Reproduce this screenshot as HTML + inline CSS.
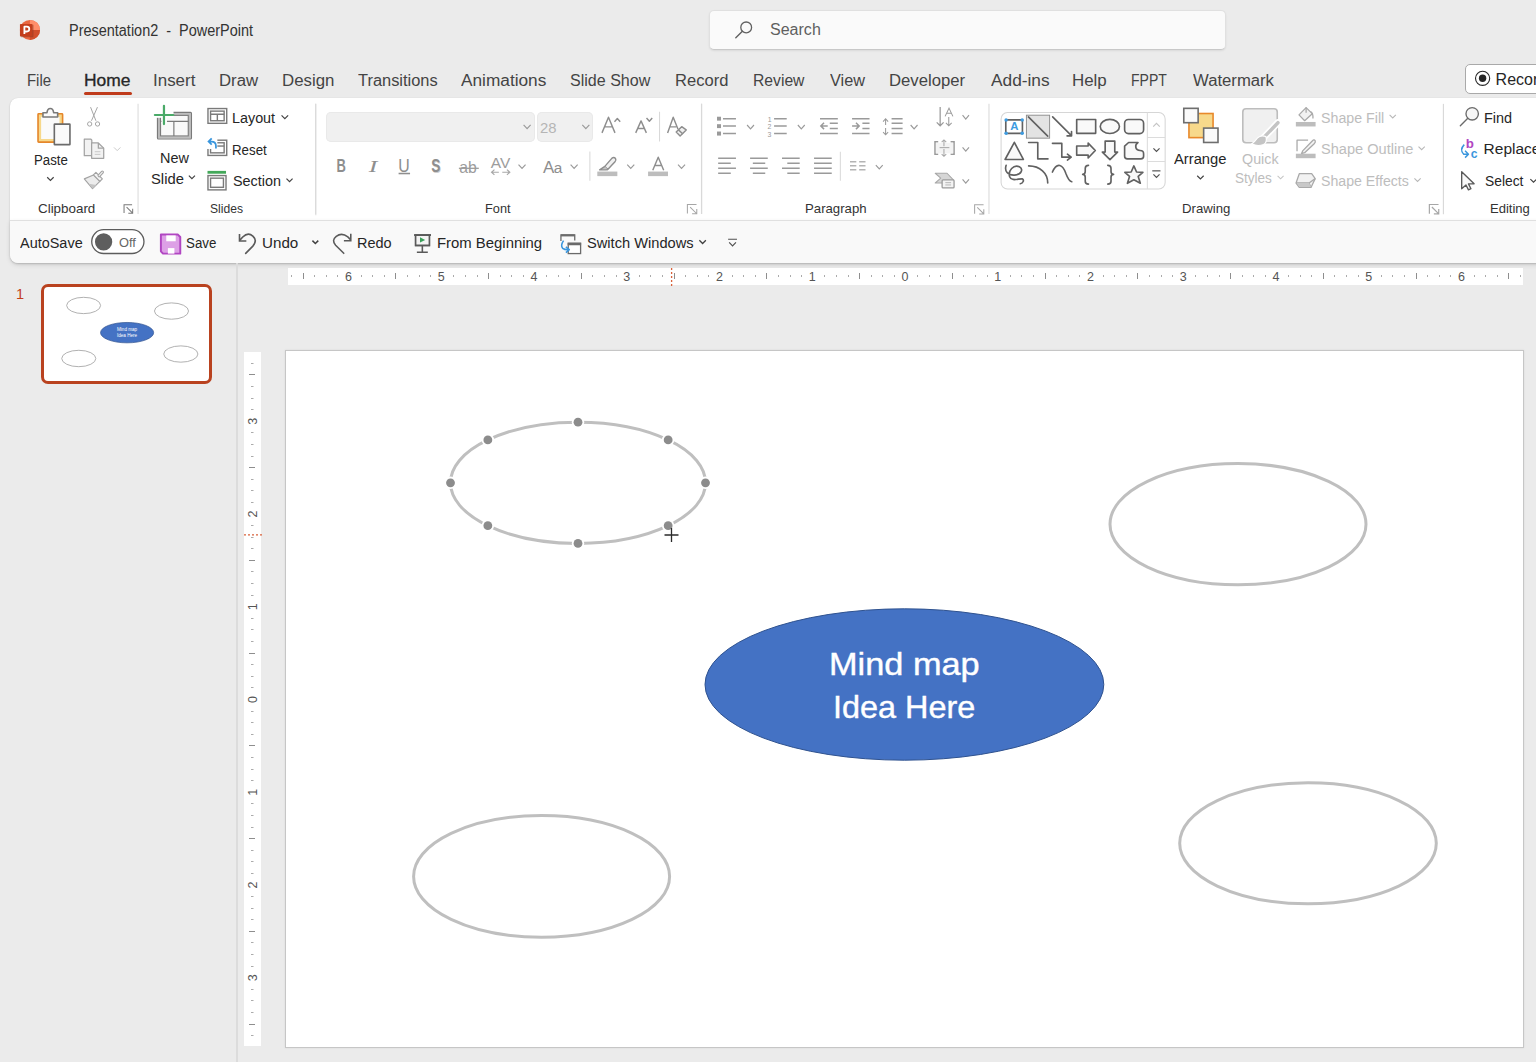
<!DOCTYPE html>
<html><head><meta charset="utf-8"><style>*{margin:0;padding:0;box-sizing:border-box}
html,body{width:1536px;height:1062px;overflow:hidden;background:#ebebeb;font-family:"Liberation Sans",sans-serif;color:#242424}
.a{position:absolute}
.f{position:absolute;white-space:nowrap;line-height:1;transform-origin:0 0}
svg{overflow:visible}
</style></head><body>
<svg class="a" style="left:10px;top:14px" width="40" height="32" viewBox="0 0 1328 1062" preserveAspectRatio="none">
  <circle cx="662" cy="530" r="335" fill="#e9663f"></circle>
  <path d="M662 195 A335 335 0 0 1 997 530 H662Z" fill="#ff8e6a"></path>
  <path d="M662 530 H997 A335 335 0 0 1 662 865Z" fill="#d14e2b"></path>
  <rect x="350" y="350" width="430" height="420" rx="30" fill="#8f3a22" opacity="0.55"></rect>
  <rect x="330" y="330" width="410" height="410" rx="28" fill="#c43e1c"></rect>
  <path d="M478 660 V420 H560 Q640 420 640 500 Q640 580 560 580 H478" fill="none" stroke="#fff" stroke-width="60" stroke-linejoin="round"></path>
</svg>
<span class="f" style="--l: 70.3; --r: 253.9; --b: 35.9; font-size: 16px; color: rgb(51, 51, 51); font-weight: normal; left: 69.4px; top: 23px; transform: scaleX(0.9035);">Presentation2&nbsp; -&nbsp; PowerPoint</span>
<div class="a" style="left:709px;top:10px;width:517px;height:40px;background:#fafafa;border:1px solid #e0e0e0;border-bottom:1px solid #c8c8c8;border-radius:5px;box-shadow:0 1px 2px rgba(0,0,0,.08)"></div>
<svg class="a" style="left:733px;top:19px" width="22" height="22" viewBox="0 0 22 22" preserveAspectRatio="none"><circle cx="13.2" cy="8.4" r="5.4" fill="none" stroke="#616161" stroke-width="1.3"></circle><path d="M9.4 12.2 L2.8 18.8" stroke="#616161" stroke-width="1.4" stroke-linecap="round"></path></svg>
<span class="f" style="--l: 770.3; --r: 820.2; --b: 35.0; font-size: 16px; color: rgb(95, 95, 95); font-weight: normal; left: 770.3px; top: 22px; transform: scaleX(1.0021);">Search</span>
<span class="f" style="--l: 28.0; --r: 51.2; --b: 85.9; font-size: 16px; color: rgb(68, 68, 68); font-weight: normal; left: 27.07px; top: 73px; transform: scaleX(0.9324);">File</span>
<span class="f" style="--l: 84.8; --r: 130.3; --b: 85.9; font-size: 16px; color: rgb(38, 38, 38); font-weight: normal; -webkit-text-stroke: 0.3px rgb(38, 38, 38); left: 83.71px; top: 73px; transform: scaleX(1.089);">Home</span>
<span class="f" style="--l: 154.2; --r: 196.1; --b: 85.9; font-size: 16px; color: rgb(68, 68, 68); font-weight: normal; left: 153.14px; top: 73px; transform: scaleX(1.0589);">Insert</span>
<span class="f" style="--l: 220.3; --r: 258.8; --b: 85.9; font-size: 16px; color: rgb(68, 68, 68); font-weight: normal; left: 219.25px; top: 73px; transform: scaleX(1.0467);">Draw</span>
<span class="f" style="--l: 282.8; --r: 333.2; --b: 85.9; font-size: 16px; color: rgb(68, 68, 68); font-weight: normal; left: 281.75px; top: 73px; transform: scaleX(1.0521);">Design</span>
<span class="f" style="--l: 357.7; --r: 437.4; --b: 85.9; font-size: 16px; color: rgb(68, 68, 68); font-weight: normal; left: 357.7px; top: 73px; transform: scaleX(1.0263);">Transitions</span>
<span class="f" style="--l: 461.2; --r: 546.5; --b: 85.9; font-size: 16px; color: rgb(68, 68, 68); font-weight: normal; left: 461.2px; top: 73px; transform: scaleX(1.0777);">Animations</span>
<span class="f" style="--l: 569.9; --r: 650.6; --b: 85.9; font-size: 16px; color: rgb(68, 68, 68); font-weight: normal; left: 569.9px; top: 73px; transform: scaleX(1.0026);">Slide Show</span>
<span class="f" style="--l: 675.7; --r: 727.1; --b: 85.9; font-size: 16px; color: rgb(68, 68, 68); font-weight: normal; left: 674.67px; top: 73px; transform: scaleX(1.0346);">Record</span>
<span class="f" style="--l: 753.9; --r: 804.8; --b: 85.9; font-size: 16px; color: rgb(68, 68, 68); font-weight: normal; left: 752.92px; top: 73px; transform: scaleX(0.9806);">Review</span>
<span class="f" style="--l: 830.2; --r: 865.6; --b: 85.9; font-size: 16px; color: rgb(68, 68, 68); font-weight: normal; left: 830.2px; top: 73px; transform: scaleX(1.0162);">View</span>
<span class="f" style="--l: 890.3; --r: 966.0; --b: 85.9; font-size: 16px; color: rgb(68, 68, 68); font-weight: normal; left: 889.26px; top: 73px; transform: scaleX(1.0427);">Developer</span>
<span class="f" style="--l: 990.7; --r: 1049.3; --b: 85.9; font-size: 16px; color: rgb(68, 68, 68); font-weight: normal; left: 990.7px; top: 73px; transform: scaleX(1.0802);">Add-ins</span>
<span class="f" style="--l: 1072.8; --r: 1106.6; --b: 85.9; font-size: 16px; color: rgb(68, 68, 68); font-weight: normal; left: 1071.74px; top: 73px; transform: scaleX(1.056);">Help</span>
<span class="f" style="--l: 1132.0; --r: 1167.1; --b: 85.9; font-size: 16px; color: rgb(68, 68, 68); font-weight: normal; left: 1131.13px; top: 73px; transform: scaleX(0.8749);">FPPT</span>
<span class="f" style="--l: 1192.5; --r: 1274.5; --b: 85.9; font-size: 16px; color: rgb(68, 68, 68); font-weight: normal; left: 1192.5px; top: 73px; transform: scaleX(1.0428);">Watermark</span>
<div class="a" style="left:84px;top:91.8px;width:47.6px;height:3px;background:#c03b1b;border-radius:2px"></div>
<div class="a" style="left:1465px;top:64px;width:100px;height:30px;background:#fff;border:1px solid #a9a9a9;border-radius:5px"></div>
<svg class="a" style="left:1474px;top:70px" width="18" height="18" viewBox="0 0 18 18" preserveAspectRatio="none"><circle cx="8.6" cy="8.3" r="7.1" fill="none" stroke="#262626" stroke-width="1.1"></circle><circle cx="8.6" cy="8.3" r="3.7" fill="#262626"></circle></svg>
<span class="f" style="--l: 1496.6; --r: -1; --b: 84.9; font-size: 16px; color: rgb(38, 38, 38); font-weight: normal; left: 1495.6px; top: 72px;">Record</span>
<div class="a" style="left:10px;top:98px;width:1560px;height:165px;background:#fff;border-radius:8px;box-shadow:0 1px 2px rgba(0,0,0,.16),0 0 1px rgba(0,0,0,.12)"></div>
<div class="a" style="left:10px;top:220px;width:1560px;height:43px;background:#f9f9f9;border-top:1px solid #e0e0e0;border-radius:0 0 8px 8px;box-shadow:0 2px 5px rgba(0,0,0,.10)"></div>
<svg class="a" style="left:10px;top:98px" width="140" height="122" viewBox="0 0 1219 1062" preserveAspectRatio="none">
  <rect x="244" y="137" width="214" height="247" rx="6" fill="#f7d88a" stroke="#e5862a" stroke-width="14"></rect>
  <rect x="271" y="164" width="160" height="193" fill="#fafafa"></rect>
  <path d="M287 128 H322 Q326 92 351 92 Q376 92 380 128 H415 V166 H287Z" fill="#fafafa" stroke="#7a7a7a" stroke-width="14" stroke-linejoin="round"></path>
  <rect x="386" y="227" width="136" height="179" rx="4" fill="#fafafa" stroke="#6b6b6b" stroke-width="14"></rect>
  <path d="M324 690 L352 718 L380 690" fill="none" stroke="#424242" stroke-width="10"></path>
  <g stroke="#7a7a7a" stroke-width="9" fill="none">
    <path d="M993 1000 V930 H1063"></path>
    <path d="M1015 950 L1068 1003 M1030 1003 H1068 V965"></path>
  </g>
  <path d="M1115 50 V1010" stroke="#dedede" stroke-width="10"></path>
</svg>
<svg class="a" style="left:80px;top:100px" width="45" height="95" viewBox="0 0 503 1062" preserveAspectRatio="none">
  <g stroke="#a3a3a3" stroke-width="11" fill="none">
    <path d="M118 80 L178 232 M195 80 L128 232"></path>
    <circle cx="108" cy="268" r="24"></circle><circle cx="196" cy="268" r="24"></circle>
  </g>
  <g stroke="#a3a3a3" stroke-width="14" fill="#f2f2f2" stroke-linejoin="round">
    <path d="M48 437 H122 L132 450 V622 H48Z"></path>
    <path d="M130 480 H205 L265 538 V652 H130Z"></path>
    <path d="M205 480 V538 H265" fill="none"></path>
  </g>
  <path d="M165 578 H228 M165 608 H228" stroke="#c4c4c4" stroke-width="10"></path>
  <path d="M380 530 L416 566 L452 530" fill="none" stroke="#c4c4c4" stroke-width="10"></path>
  <g stroke="#a3a3a3" stroke-width="13" stroke-linejoin="round">
    <path d="M48 882 L150 838 L222 910 L140 990Z" fill="#ececec"></path>
    <path d="M98 936 L182 950 L140 990Z" fill="#c4c4c4" stroke="none"></path>
    <path d="M150 838 L178 810 L250 882 L222 910Z" fill="#f4f4f4"></path>
    <path d="M214 846 L250 806" stroke-width="36" stroke-linecap="round"></path>
  </g>
  <path d="M214 846 L250 806" stroke="#f4f4f4" stroke-width="12" stroke-linecap="round"></path>
</svg>
<span class="f" style="--l: 34.7; --r: 67.2; --b: 165.2; font-size: 15.5px; color: rgb(38, 38, 38); font-weight: normal; left: 33.85px; top: 152px; transform: scaleX(0.8549);">Paste</span>
<span class="f" style="--l: 37.6; --r: 94.4; --b: 213.3; font-size: 13.5px; color: rgb(51, 51, 51); font-weight: normal; left: 37.6px; top: 202px; transform: scaleX(0.9917);">Clipboard</span>
<svg class="a" style="left:140px;top:98px" width="180" height="122" viewBox="0 0 1536 1041" preserveAspectRatio="none">
  <rect x="162" y="135" width="263" height="202" fill="#f9f9f9" stroke="#bdbdbd" stroke-width="18"></rect>
  <g fill="none" stroke="#7a7a7a" stroke-width="10">
    <rect x="149" y="122" width="290" height="228" rx="8"></rect>
    <rect x="175" y="148" width="237" height="176"></rect>
    <path d="M175 200 H412 M289 200 V324"></path>
  </g>
  <rect x="105" y="50" width="181" height="119" fill="#fff"></rect>
  <rect x="183" y="169" width="47" height="50" fill="#fff"></rect>
  <path d="M127 145 H284 M204.5 67 V222" stroke="#4aaa68" stroke-width="19" stroke-linecap="round"></path>
  <g fill="none" stroke="#7a7a7a" stroke-width="12">
    <rect x="580" y="90" width="160" height="126"></rect>
    <rect x="602" y="112" width="116" height="82"></rect>
    <path d="M602 138 H718 M660 138 V194"></path>
    <rect x="580" y="360" width="160" height="130"></rect>
    <rect x="602" y="382" width="116" height="86"></rect>
    <path d="M602 410 H718"></path>
    <rect x="580" y="662" width="154" height="122"></rect>
    <rect x="602" y="684" width="110" height="78"></rect>
  </g>
  <rect x="565" y="340" width="95" height="95" fill="#fff"></rect>
  <path d="M648 430 V410 Q648 372 610 372 H588 M612 345 L585 372 L612 398" fill="none" stroke="#3a96dd" stroke-width="15"></path>
  <rect x="576" y="622" width="158" height="24" fill="#43a85a"></rect>
  <g fill="none" stroke="#424242" stroke-width="10">
    <path d="M1208 148 L1236 176 L1264 148"></path>
    <path d="M417 662 L443 688 L469 662"></path>
    <path d="M1250 688 L1276 714 L1302 688"></path>
  </g>
  <path d="M1500 50 V1000" stroke="#dedede" stroke-width="10"></path>
</svg>
<span class="f" style="--l: 160.5; --r: 189.2; --b: 163.0; font-size: 15.5px; color: rgb(38, 38, 38); font-weight: normal; left: 159.57px; top: 150px; transform: scaleX(0.9314);">New</span>
<span class="f" style="--l: 151.1; --r: 183.4; --b: 183.5; font-size: 15.5px; color: rgb(38, 38, 38); font-weight: normal; left: 151.1px; top: 171px; transform: scaleX(0.9543);">Slide</span>
<span class="f" style="--l: 233.2; --r: 276.0; --b: 122.6; font-size: 15.5px; color: rgb(38, 38, 38); font-weight: normal; left: 232.27px; top: 110px; transform: scaleX(0.9258);">Layout</span>
<span class="f" style="--l: 233.2; --r: 267.7; --b: 154.5; font-size: 15.5px; color: rgb(38, 38, 38); font-weight: normal; left: 232.34px; top: 142px; transform: scaleX(0.8585);">Reset</span>
<span class="f" style="--l: 233.2; --r: 280.6; --b: 185.9; font-size: 15.5px; color: rgb(38, 38, 38); font-weight: normal; left: 233.2px; top: 173px; transform: scaleX(0.928);">Section</span>
<span class="f" style="--l: 209.7; --r: 242.9; --b: 213.3; font-size: 13.5px; color: rgb(51, 51, 51); font-weight: normal; left: 209.7px; top: 202px; transform: scaleX(0.8968);">Slides</span>
<div class="a" style="left:326px;top:111.7px;width:208.5px;height:30px;background:#f0f0f0;border-radius:5px;box-shadow:inset 0 0 0 1px #e9e9e9"></div>
<div class="a" style="left:536.5px;top:111.7px;width:56.6px;height:30px;background:#f0f0f0;border-radius:5px;box-shadow:inset 0 0 0 1px #e9e9e9"></div>
<span class="f" style="--l: 539.7; --r: 555.6; --b: 133.2; font-size: 15.5px; color: rgb(181, 181, 181); font-weight: normal; left: 539.7px; top: 120px; transform: scaleX(0.9567);">28</span>
<svg class="a" style="left:315px;top:98px" width="200" height="122" viewBox="0 0 1536 937" preserveAspectRatio="none">
  <path d="M5 45 V890" stroke="#d9d9d9" stroke-width="8"></path>
  <text x="165" y="565" font-family="Liberation Sans" font-size="140" font-weight="bold" fill="#8e8e8e" textLength="72" lengthAdjust="spacingAndGlyphs">B</text>
  <text x="412" y="565" font-family="Liberation Serif" font-size="135" font-style="italic" fill="#8e8e8e" textLength="66" lengthAdjust="spacingAndGlyphs">I</text>
  <text x="640" y="565" font-family="Liberation Sans" font-size="136" fill="#8e8e8e" textLength="88" lengthAdjust="spacingAndGlyphs">U</text>
  <path d="M642 580 H730" stroke="#8e8e8e" stroke-width="12"></path>
  <text x="899" y="576" font-family="Liberation Sans" font-size="136" font-weight="bold" fill="#d0d0d0" textLength="70" lengthAdjust="spacingAndGlyphs">S</text><text x="893" y="568" font-family="Liberation Sans" font-size="136" font-weight="bold" fill="#8e8e8e" textLength="70" lengthAdjust="spacingAndGlyphs">S</text>
  <text x="1108" y="575" font-family="Liberation Sans" font-size="125" fill="#9c9c9c" textLength="135" lengthAdjust="spacingAndGlyphs">ab</text>
  <path d="M1105 540 H1258" stroke="#9c9c9c" stroke-width="10"></path>
  <text x="1350" y="535" font-family="Liberation Sans" font-size="118" fill="#9c9c9c" textLength="150" lengthAdjust="spacingAndGlyphs">AV</text>
  <g fill="none" stroke="#a8a8a8" stroke-width="9">
    <path d="M1352 570 H1412 M1378 550 L1356 570 L1378 590"></path>
    <path d="M1438 570 H1498 M1474 550 L1496 570 L1474 590"></path>
  </g>
</svg>
<svg class="a" style="left:515px;top:98px" width="200" height="122" viewBox="0 0 1536 937" preserveAspectRatio="none">
  <g fill="none" stroke="#9a9a9a" stroke-width="9">
    <path d="M66 207 L93 236 L120 207"></path>
    <path d="M517 207 L544 236 L571 207"></path>
    <path d="M27 512 L54 541 L81 512"></path>
    <path d="M427 512 L454 541 L481 512"></path>
    <path d="M862 512 L889 541 L916 512"></path>
    <path d="M1252 512 L1279 541 L1306 512"></path>
  </g>
  <g fill="none" stroke="#8e8e8e" stroke-width="11" stroke-linejoin="round">
    <path d="M668 268 L718 148 L768 268 M688 222 H748"></path>
    <path d="M764 182 L786 158 L808 182"></path>
    <path d="M927 268 L968 176 L1009 268 M943 234 H993"></path>
    <path d="M1010 154 L1032 178 L1054 154"></path>
    <path d="M1172 268 L1215 148 L1252 240 M1188 222 H1238"></path>
    <path d="M1238 262 L1280 220 L1315 245 L1268 292Z" fill="#f0f0f0"></path>
    <path d="M1255 245 L1290 276"></path>
  </g>
  <path d="M1110 105 V335 M575 410 V635 M1432 45 V890" stroke="#d9d9d9" stroke-width="8"></path>
  <text x="215" y="575" font-family="Liberation Sans" font-size="130" fill="#8e8e8e">A</text>
  <text x="298" y="575" font-family="Liberation Sans" font-size="118" fill="#8e8e8e">a</text>
  <g fill="none" stroke="#8e8e8e" stroke-width="11" stroke-linejoin="round">
    <path d="M690 525 L745 462 Q760 450 772 465 Q780 478 768 490 L712 550 Z" fill="#f0f0f0"></path>
    <path d="M690 525 L650 552 H700 L712 550" fill="#c4c4c4"></path>
    <path d="M1058 555 L1100 455 L1142 555 M1074 518 H1126"></path>
  </g>
  <rect x="632" y="565" width="154" height="35" fill="#bdbdbd"></rect>
  <rect x="1022" y="565" width="153" height="35" fill="#bdbdbd"></rect>
  <g stroke="#a6a6a6" stroke-width="8" fill="none">
    <path d="M1324 888 V818 H1394"></path>
    <path d="M1345 838 L1396 889 M1360 889 H1396 V853"></path>
  </g>
</svg>
<span class="f" style="--l: 486.2; --r: 511.0; --b: 213.3; font-size: 13.5px; color: rgb(51, 51, 51); font-weight: normal; left: 485.26px; top: 202px; transform: scaleX(0.9443);">Font</span>
<svg class="a" style="left:700px;top:98px" width="150" height="122" viewBox="0 0 1306 1062" preserveAspectRatio="none">
  <path d="M15 50 V1010 M1222 468 V720" stroke="#d9d9d9" stroke-width="9"></path>
  <g fill="#9a9a9a">
    <rect x="148" y="163" width="35" height="34"></rect><rect x="148" y="228" width="35" height="34"></rect><rect x="148" y="292" width="35" height="35"></rect>
  </g>
  <g stroke="#9a9a9a" stroke-width="13" fill="none">
    <path d="M200 180 H313 M200 243 H313 M200 310 H313"></path>
    <path d="M645 180 H755 M645 243 H755 M645 310 H755"></path>
    <path d="M1045 180 H1200 M1045 310 H1200 M1130 220 H1200 M1130 265 H1200"></path>
    <path d="M1050 243 H1112 M1080 215 L1052 243 L1080 271"></path>
    <path d="M158 525 H313 M158 568 H268 M158 612 H313 M158 656 H268"></path>
    <path d="M436 525 H590 M460 568 H568 M436 612 H590 M460 656 H568"></path>
    <path d="M714 525 H868 M760 568 H868 M714 612 H868 M760 656 H868"></path>
    <path d="M993 525 H1147 M993 568 H1147 M993 612 H1147 M993 656 H1147"></path>
  </g>
  <path d="M410 235 L440 268 L470 235" fill="none" stroke="#9a9a9a" stroke-width="10"></path><path d="M852 235 L882 268 L912 235" fill="none" stroke="#9a9a9a" stroke-width="10"></path>
  <g font-family="Liberation Sans" font-size="60" fill="#9a9a9a">
    <text x="590" y="205">1</text><text x="588" y="270">2</text><text x="588" y="338">3</text>
  </g>
</svg>
<svg class="a" style="left:850px;top:98px" width="150" height="122" viewBox="0 0 1306 1062" preserveAspectRatio="none">
  <path d="M1210 50 V1010" stroke="#d9d9d9" stroke-width="9"></path>
  <g stroke="#9a9a9a" stroke-width="13" fill="none">
    <path d="M18 180 H170 M18 310 H170 M108 220 H170 M108 265 H170"></path>
    <path d="M18 243 H80 M52 215 L80 243 L52 271"></path>
    <path d="M362 180 H458 M362 220 H458 M362 265 H458 M362 310 H458"></path>
    <path d="M0 555 H55 M0 590 H55 M0 625 H55 M80 555 H135 M80 590 H135 M80 625 H135" stroke="#b4b4b4"></path>
  </g>
  <g stroke="#9a9a9a" stroke-width="9" fill="none">
    <path d="M310 180 V235 M288 205 L310 180 L332 205"></path>
    <path d="M310 262 V320 M288 297 L310 320 L332 297"></path>
    <path d="M785 78 V242 M755 212 L785 242 L815 212" stroke-width="11"></path>
    <path d="M860 165 V242 M835 217 L860 242 L885 217"></path>
    <path d="M828 160 L862 88 L896 160 M840 133 H884"></path>
  </g>
  <path d="M768 380 H740 V490 H768 M876 380 H906 V490 H876" fill="none" stroke="#9a9a9a" stroke-width="13"></path>
  <rect x="748" y="390" width="150" height="92" fill="#f4f4f4"></rect>
  <g stroke="#a8a8a8" stroke-width="9" fill="none">
    <path d="M780 432 H865"></path>
    <path d="M818 365 V420 M798 385 L818 365 L838 385"></path>
    <path d="M818 445 V508 M798 488 L818 508 L838 488"></path>
  </g>
  <path d="M742 655 H845 L900 712 L845 740 H742 L790 698Z" fill="#d6d6d6" stroke="#a8a8a8" stroke-width="9" stroke-linejoin="round"></path>
  <rect x="802" y="712" width="104" height="70" rx="8" fill="#f4f4f4" stroke="#9a9a9a" stroke-width="11"></rect>
  <path d="M830 737 H880 M830 757 H880" stroke="#b0b0b0" stroke-width="8"></path>
  <path d="M528 235 L558 268 L588 235" fill="none" stroke="#9a9a9a" stroke-width="10"></path><path d="M225 585 L255 618 L285 585" fill="none" stroke="#9a9a9a" stroke-width="10"></path><path d="M980 150 L1008 183 L1036 150" fill="none" stroke="#9a9a9a" stroke-width="10"></path><path d="M980 430 L1008 463 L1036 430" fill="none" stroke="#9a9a9a" stroke-width="10"></path><path d="M980 708 L1008 741 L1036 708" fill="none" stroke="#9a9a9a" stroke-width="10"></path>
  <g stroke="#a6a6a6" stroke-width="9" fill="none">
    <path d="M1085 1008 V930 H1163"></path>
    <path d="M1108 952 L1165 1009 M1125 1009 H1165 V969"></path>
  </g>
</svg>
<span class="f" style="--l: 805.5; --r: 865.6; --b: 213.3; font-size: 13.5px; color: rgb(51, 51, 51); font-weight: normal; left: 804.52px; top: 202px; transform: scaleX(0.9767);">Paragraph</span>
<svg class="a" style="left:995px;top:105px" width="180" height="90" viewBox="0 0 1536 768" preserveAspectRatio="none">
  <rect x="52" y="64" width="1400" height="652" rx="55" fill="#fff" stroke="#d6d6d6" stroke-width="9"></rect>
  <path d="M1300 64 V716 M1300 278 H1452 M1300 482 H1452" stroke="#dcdcdc" stroke-width="9"></path>
  <rect x="268" y="87" width="198" height="196" fill="#e3e3e3" stroke="#8c8c8c" stroke-width="8"></rect>
  <g fill="#f9f9f9" stroke="#616161" stroke-width="14" stroke-linejoin="round" stroke-linecap="round">
    <rect x="92" y="127" width="142" height="115" fill="none"></rect>
    <path d="M285 102 L450 265" fill="none"></path>
    <path d="M492 102 L652 262 M615 264 H653 V226" fill="none"></path>
    <rect x="697" y="124" width="162" height="118"></rect>
    <ellipse cx="980" cy="183" rx="82" ry="60"></ellipse>
    <rect x="1106" y="124" width="162" height="120" rx="32"></rect>
    <path d="M165 318 L242 465 H86Z"></path>
    <path d="M287 320 H365 V460 H452" fill="none"></path>
    <path d="M490 327 H570 V445 H650 M618 420 L650 445 L618 470" fill="none"></path>
    <path d="M697 350 H795 V325 L856 388 L795 452 V428 H697Z"></path>
    <path d="M940 308 H1022 V402 H1046 L981 466 L916 402 H940Z"></path>
    <path d="M1140 320 H1220 C1190 340 1195 388 1238 388 Q1268 388 1268 415 V438 Q1268 460 1245 460 H1130 Q1106 460 1106 438 V350Z"></path>
    <path d="M95 515 C78 565 110 600 165 598 C230 596 242 545 208 527 C160 505 108 560 125 612 C140 655 200 628 232 630 C252 640 240 668 216 672" fill="none"></path>
    <path d="M287 520 C385 522 450 580 450 665" fill="none"></path>
    <path d="M490 572 C530 480 580 510 605 585 C625 640 640 652 655 655" fill="none"></path>
    <path d="M798 515 Q770 515 770 542 V568 Q770 592 748 592 Q770 592 770 616 V650 Q770 675 798 675" fill="none"></path>
    <path d="M962 515 Q990 515 990 542 V568 Q990 592 1012 592 Q990 592 990 616 V650 Q990 675 962 675" fill="none"></path>
    <path d="M1185 520 L1208 572 L1262 575 L1222 610 L1240 668 L1185 638 L1130 668 L1148 610 L1108 575 L1162 572Z"></path>
  </g>
  <g fill="#3d9be0">
    <circle cx="95" cy="127" r="15"></circle><circle cx="232" cy="127" r="15"></circle><circle cx="95" cy="242" r="15"></circle><circle cx="232" cy="242" r="15"></circle>
  </g>
  <text x="130" y="215" font-family="Liberation Sans" font-size="100" font-weight="bold" fill="#3d9be0" textLength="70" lengthAdjust="spacingAndGlyphs">A</text>
  <g fill="none" stroke-width="10">
    <path d="M1350 185 L1378 157 L1406 185" stroke="#c4c4c4"></path>
    <path d="M1352 370 L1378 396 L1404 370" stroke="#505050"></path>
    <path d="M1342 562 H1412" stroke="#505050"></path>
    <path d="M1352 592 L1378 618 L1404 592" stroke="#505050"></path>
  </g>
</svg>
<svg class="a" style="left:1170px;top:98px" width="120" height="122" viewBox="0 0 1045 1062" preserveAspectRatio="none">
  <rect x="165" y="135" width="210" height="210" fill="#f7d98b" stroke="#e8892b" stroke-width="14"></rect>
  <rect x="120" y="90" width="125" height="125" fill="#fafafa" stroke="#6e6e6e" stroke-width="14"></rect>
  <rect x="293" y="262" width="125" height="125" fill="#fafafa" stroke="#6e6e6e" stroke-width="14"></rect>
  <path d="M237 677 L265 705 L293 677" fill="none" stroke="#424242" stroke-width="10"></path>
  <rect x="634" y="94" width="300" height="295" rx="28" fill="#f0f0f0" stroke="#bdbdbd" stroke-width="14"></rect>
  <path d="M940 215 L815 345" stroke="#fff" stroke-width="60" stroke-linecap="round"></path>
  <path d="M940 215 L815 345" stroke="#c4c4c4" stroke-width="30" stroke-linecap="round"></path>
  <path d="M835 335 Q790 318 760 350 Q740 380 712 398 Q760 425 815 405 Q850 385 835 335Z" fill="#c4c4c4" stroke="#fff" stroke-width="10"></path>
  <path d="M937 677 L963 703 L989 677" fill="none" stroke="#c4c4c4" stroke-width="9"></path>
</svg>
<span class="f" style="--l: 1174.4; --r: 1226.3; --b: 163.5; font-size: 15.5px; color: rgb(38, 38, 38); font-weight: normal; left: 1174.4px; top: 151px; transform: scaleX(0.9519);">Arrange</span>
<span class="f" style="--l: 1242.1; --r: 1278.9; --b: 163.5; font-size: 15.5px; color: rgb(189, 189, 189); font-weight: normal; left: 1242.1px; top: 151px; transform: scaleX(0.923);">Quick</span>
<span class="f" style="--l: 1234.5; --r: 1271.6; --b: 183.0; font-size: 15.5px; color: rgb(189, 189, 189); font-weight: normal; left: 1234.5px; top: 170px; transform: scaleX(0.8738);">Styles</span>
<span class="f" style="--l: 1182.6; --r: 1229.5; --b: 213.3; font-size: 13.5px; color: rgb(51, 51, 51); font-weight: normal; left: 1181.62px; top: 202px; transform: scaleX(0.9769);">Drawing</span>
<svg class="a" style="left:1290px;top:100px" width="150" height="100" viewBox="0 0 1536 1024" preserveAspectRatio="none">
  <g fill="#f2f2f2" stroke="#a9a9a9" stroke-width="13" stroke-linejoin="round">
    <path d="M92 152 L165 78 L228 140 L150 212Z"></path>
    <path d="M165 78 V130" fill="none"></path>
    <path d="M210 118 Q238 128 235 190" fill="none"></path>
    <path d="M72 525 V412 H185" fill="none"></path>
    <path d="M132 518 L228 420 Q248 400 258 418 Q265 432 248 448 L150 540 L118 548Z"></path>
    <path d="M62 850 L95 755 H222 L258 805 L215 895 H95Z"></path>
    <path d="M62 850 H195 L258 805 M195 850 L215 895" fill="none"></path>
  </g>
  <path d="M68 850 H195 L215 890 H100Z" fill="#c8c8c8"></path>
  <rect x="60" y="225" width="202" height="46" fill="#bdbdbd"></rect>
  <rect x="60" y="550" width="202" height="46" fill="#bdbdbd"></rect>
  <g fill="none" stroke="#b8b8b8" stroke-width="11">
    <path d="M1020 152 L1052 184 L1084 152"></path>
    <path d="M1316 477 L1348 509 L1380 477"></path>
    <path d="M1274 802 L1306 834 L1338 802"></path>
  </g>
</svg>
<span class="f" style="--l: 1321.0; --r: 1383.8; --b: 122.9; font-size: 15.5px; color: rgb(189, 189, 189); font-weight: normal; left: 1321px; top: 110px; transform: scaleX(0.917);">Shape Fill</span>
<span class="f" style="--l: 1321.0; --r: 1412.9; --b: 154.2; font-size: 15.5px; color: rgb(189, 189, 189); font-weight: normal; left: 1321px; top: 141px; transform: scaleX(0.9414);">Shape Outline</span>
<span class="f" style="--l: 1321.0; --r: 1409.1; --b: 186.4; font-size: 15.5px; color: rgb(189, 189, 189); font-weight: normal; left: 1321px; top: 173px; transform: scaleX(0.9132);">Shape Effects</span>
<svg class="a" style="left:1236px;top:55px" width="300" height="170" viewBox="0 0 1536 870" preserveAspectRatio="none">
  <g stroke="#a6a6a6" stroke-width="6" fill="none">
    <path d="M990 812 V765 H1037"></path>
    <path d="M1003 778 L1038 813 M1013 813 H1038 V788"></path>
  </g>
  <path d="M1062 250 V815" stroke="#d9d9d9" stroke-width="6"></path>
</svg>
<svg class="a" style="left:1440px;top:100px" width="96" height="120" viewBox="0 0 850 1062" preserveAspectRatio="none">
  <circle cx="285" cy="122" r="55" fill="#f7f7f7" stroke="#6b6b6b" stroke-width="12"></circle>
  <path d="M246 162 L180 228" stroke="#6b6b6b" stroke-width="12" stroke-linecap="round"></path>
  <text x="228" y="428" font-family="Liberation Sans" font-size="118" font-weight="bold" fill="#b146c2">b</text>
  <text x="272" y="516" font-family="Liberation Sans" font-size="108" font-weight="bold" fill="#3a96dd">c</text>
  <path d="M215 395 Q170 440 210 480 L250 480 M222 450 L252 480 L222 510" fill="none" stroke="#3a96dd" stroke-width="13" stroke-linejoin="round"></path>
  <path d="M192 635 V785 L230 752 L252 795 L274 785 L252 742 H302Z" fill="#fafafa" stroke="#5a5a5a" stroke-width="12" stroke-linejoin="round"></path>
  <path d="M800 700 L828 728 L856 700" fill="none" stroke="#424242" stroke-width="10"></path>
</svg>
<span class="f" style="--l: 1484.6; --r: 1511.2; --b: 122.6; font-size: 15.5px; color: rgb(38, 38, 38); font-weight: normal; left: 1483.67px; top: 110px; transform: scaleX(0.9323);">Find</span>
<span class="f" style="--l: 1484.6; --r: -1; --b: 154.2; font-size: 15.5px; color: rgb(38, 38, 38); font-weight: normal; left: 1483.6px; top: 141px;">Replace</span>
<span class="f" style="--l: 1484.6; --r: 1523.6; --b: 186.4; font-size: 15.5px; color: rgb(38, 38, 38); font-weight: normal; left: 1484.6px; top: 173px; transform: scaleX(0.891);">Select</span>
<span class="f" style="--l: 1490.8; --r: 1529.2; --b: 213.3; font-size: 13.5px; color: rgb(51, 51, 51); font-weight: normal; left: 1489.83px; top: 202px; transform: scaleX(0.9656);">Editing</span>
<span class="f" style="--l: 20.2; --r: 82.3; --b: 248.1; font-size: 15.5px; color: rgb(38, 38, 38); font-weight: normal; left: 20.2px; top: 235px; transform: scaleX(0.9325);">AutoSave</span>
<svg class="a" style="left:80px;top:224px" width="250" height="36" viewBox="0 0 1536 221" preserveAspectRatio="none">
  <rect x="72" y="35" width="321" height="146" rx="73" fill="#fff" stroke="#5c5c5c" stroke-width="8"></rect>
  <circle cx="145" cy="110" r="53" fill="#5e5e5e"></circle>
  <path d="M497 64 H600 L616 80 V182 H510 L497 168Z" fill="#dda0e6" stroke="#b146c2" stroke-width="12" stroke-linejoin="round"></path>
  <rect x="530" y="70" width="58" height="36" fill="#fff"></rect>
  <rect x="540" y="148" width="40" height="34" fill="#fff"></rect>
  <path d="M1018 180 L1062 136 Q1092 102 1062 74 Q1032 48 1000 80 L985 96" fill="none" stroke="#5a5a5a" stroke-width="10" stroke-linecap="round"></path>
  <path d="M980 62 V104 H1022" fill="none" stroke="#5a5a5a" stroke-width="10"></path>
  <path d="M1428 102 L1446 120 L1464 102" fill="none" stroke="#424242" stroke-width="9"></path>
</svg>
<span class="f" style="--l: 119.1; --r: 136.2; --b: 246.8; font-size: 13.5px; color: rgb(102, 102, 102); font-weight: normal; left: 119.1px; top: 236px; transform: scaleX(0.9496);">Off</span>
<span class="f" style="--l: 186.1; --r: 215.9; --b: 248.1; font-size: 15.5px; color: rgb(38, 38, 38); font-weight: normal; left: 186.1px; top: 235px; transform: scaleX(0.8586);">Save</span>
<span class="f" style="--l: 262.6; --r: 297.3; --b: 248.1; font-size: 15.5px; color: rgb(38, 38, 38); font-weight: normal; left: 261.62px; top: 235px; transform: scaleX(0.9793);">Undo</span>
<svg class="a" style="left:320px;top:226px" width="240" height="32" viewBox="0 0 1536 205" preserveAspectRatio="none">
  <path d="M152 175 L100 123 Q72 92 104 66 Q140 40 178 70 L192 84" fill="none" stroke="#5a5a5a" stroke-width="10" stroke-linecap="round"></path>
  <path d="M197 50 V94 H153" fill="none" stroke="#5a5a5a" stroke-width="10"></path>
  <path d="M603 58 H710 M612 58 V124 H700 V58" fill="none" stroke="#5a5a5a" stroke-width="10"></path>
  <rect x="612" y="62" width="88" height="62" fill="#f4f4f4"></rect>
  <path d="M603 58 H710" stroke="#5a5a5a" stroke-width="12"></path>
  <path d="M612 62 V124 H700 V62" fill="none" stroke="#5a5a5a" stroke-width="10"></path>
  <path d="M640 72 L673 89 L640 106Z" fill="#3aa05a"></path>
  <path d="M655 124 V166 M620 168 H690" stroke="#5a5a5a" stroke-width="10"></path>
</svg>
<span class="f" style="--l: 358.0; --r: 391.1; --b: 247.6; font-size: 15.5px; color: rgb(38, 38, 38); font-weight: normal; left: 357.07px; top: 235px; transform: scaleX(0.9341);">Redo</span>
<span class="f" style="--l: 438.4; --r: 541.9; --b: 247.6; font-size: 15.5px; color: rgb(38, 38, 38); font-weight: normal; left: 437.44px; top: 235px; transform: scaleX(0.9602);">From Beginning</span>
<svg class="a" style="left:550px;top:226px" width="200" height="32" viewBox="0 0 1536 246" preserveAspectRatio="none">
  <path d="M84 115 V68 H190 V112" fill="none" stroke="#6b6b6b" stroke-width="10"></path>
  <rect x="84" y="64" width="106" height="16" fill="#6b6b6b"></rect>
  <rect x="140" y="132" width="95" height="80" fill="#fff" stroke="#6b6b6b" stroke-width="10"></rect>
  <rect x="136" y="130" width="103" height="18" fill="#6b6b6b"></rect>
  <path d="M104 112 Q78 150 98 172 Q112 184 145 182 M122 160 L148 182 L122 204" fill="none" stroke="#3a96dd" stroke-width="12" stroke-linejoin="round"></path>
  <path d="M1147 110 L1172 135 L1197 110" fill="none" stroke="#424242" stroke-width="10"></path>
  <path d="M1368 102 H1436 M1376 126 L1402 153 L1428 126" fill="none" stroke="#505050" stroke-width="9"></path>
</svg>
<span class="f" style="--l: 587.1; --r: 693.9; --b: 247.5; font-size: 15.5px; color: rgb(38, 38, 38); font-weight: normal; left: 587.1px; top: 235px; transform: scaleX(0.9444);">Switch Windows</span>
<div class="a" style="left:236px;top:263px;width:2px;height:799px;background:#dcdcdc"></div>
<span class="f" style="--l: 16.6; --r: 23.4; --b: 298.8; font-size: 15px; color: rgb(196, 62, 28); font-weight: normal; left: 15.63px; top: 286px; transform: scaleX(0.9714);">1</span>
<div class="a" style="left:41px;top:284px;width:171px;height:100px;border:3px solid #b9421f;border-radius:7px;background:#fff"></div>
<svg class="a" style="left:0px;top:0px" width="1536" height="1062" viewBox="0 0 1536 1062" preserveAspectRatio="none"><ellipse cx="83.62" cy="305.48" rx="16.98" ry="8.16" fill="none" stroke="#a8a8a8" stroke-width="0.9"></ellipse><ellipse cx="171.51" cy="311.06" rx="17.05" ry="8.16" fill="none" stroke="#a8a8a8" stroke-width="0.9"></ellipse><ellipse cx="78.77" cy="358.49" rx="17.05" ry="8.19" fill="none" stroke="#a8a8a8" stroke-width="0.9"></ellipse><ellipse cx="180.83" cy="354.03" rx="17.09" ry="8.15" fill="none" stroke="#a8a8a8" stroke-width="0.9"></ellipse><ellipse cx="127.09" cy="332.65" rx="26.55" ry="10.19" fill="#4472c4" stroke="#2f528f" stroke-width="0.7"></ellipse><text x="127.09" y="330.96" font-family="Liberation Sans" font-size="4.6" fill="#fff" text-anchor="middle">Mind map</text><text x="127.09" y="336.75" font-family="Liberation Sans" font-size="4.6" fill="#fff" text-anchor="middle">Idea Here</text></svg>
<div class="a" style="left:288px;top:268px;width:1235px;height:17px;background:#fff"></div>
<div class="a" style="left:244px;top:352px;width:17px;height:694px;background:#fff"></div>
<svg class="a" style="left:0px;top:0px" width="1536" height="1062" viewBox="0 0 1536 1062" preserveAspectRatio="none"><rect x="291" y="275" width="1" height="2" fill="#ababab"></rect><rect x="303" y="273" width="1" height="6" fill="#8e8e8e"></rect><rect x="314" y="275" width="1" height="2" fill="#ababab"></rect><rect x="326" y="275" width="1" height="2" fill="#ababab"></rect><rect x="337" y="275" width="1" height="2" fill="#ababab"></rect><rect x="361" y="275" width="1" height="2" fill="#ababab"></rect><rect x="372" y="275" width="1" height="2" fill="#ababab"></rect><rect x="384" y="275" width="1" height="2" fill="#ababab"></rect><rect x="395" y="273" width="1" height="6" fill="#8e8e8e"></rect><rect x="407" y="275" width="1" height="2" fill="#ababab"></rect><rect x="419" y="275" width="1" height="2" fill="#ababab"></rect><rect x="430" y="275" width="1" height="2" fill="#ababab"></rect><rect x="453" y="275" width="1" height="2" fill="#ababab"></rect><rect x="465" y="275" width="1" height="2" fill="#ababab"></rect><rect x="477" y="275" width="1" height="2" fill="#ababab"></rect><rect x="488" y="273" width="1" height="6" fill="#8e8e8e"></rect><rect x="500" y="275" width="1" height="2" fill="#ababab"></rect><rect x="511" y="275" width="1" height="2" fill="#ababab"></rect><rect x="523" y="275" width="1" height="2" fill="#ababab"></rect><rect x="546" y="275" width="1" height="2" fill="#ababab"></rect><rect x="558" y="275" width="1" height="2" fill="#ababab"></rect><rect x="569" y="275" width="1" height="2" fill="#ababab"></rect><rect x="581" y="273" width="1" height="6" fill="#8e8e8e"></rect><rect x="592" y="275" width="1" height="2" fill="#ababab"></rect><rect x="604" y="275" width="1" height="2" fill="#ababab"></rect><rect x="616" y="275" width="1" height="2" fill="#ababab"></rect><rect x="639" y="275" width="1" height="2" fill="#ababab"></rect><rect x="650" y="275" width="1" height="2" fill="#ababab"></rect><rect x="662" y="275" width="1" height="2" fill="#ababab"></rect><rect x="674" y="273" width="1" height="6" fill="#8e8e8e"></rect><rect x="685" y="275" width="1" height="2" fill="#ababab"></rect><rect x="697" y="275" width="1" height="2" fill="#ababab"></rect><rect x="708" y="275" width="1" height="2" fill="#ababab"></rect><rect x="732" y="275" width="1" height="2" fill="#ababab"></rect><rect x="743" y="275" width="1" height="2" fill="#ababab"></rect><rect x="755" y="275" width="1" height="2" fill="#ababab"></rect><rect x="766" y="273" width="1" height="6" fill="#8e8e8e"></rect><rect x="778" y="275" width="1" height="2" fill="#ababab"></rect><rect x="790" y="275" width="1" height="2" fill="#ababab"></rect><rect x="801" y="275" width="1" height="2" fill="#ababab"></rect><rect x="824" y="275" width="1" height="2" fill="#ababab"></rect><rect x="836" y="275" width="1" height="2" fill="#ababab"></rect><rect x="848" y="275" width="1" height="2" fill="#ababab"></rect><rect x="859" y="273" width="1" height="6" fill="#8e8e8e"></rect><rect x="871" y="275" width="1" height="2" fill="#ababab"></rect><rect x="882" y="275" width="1" height="2" fill="#ababab"></rect><rect x="894" y="275" width="1" height="2" fill="#ababab"></rect><rect x="917" y="275" width="1" height="2" fill="#ababab"></rect><rect x="929" y="275" width="1" height="2" fill="#ababab"></rect><rect x="940" y="275" width="1" height="2" fill="#ababab"></rect><rect x="952" y="273" width="1" height="6" fill="#8e8e8e"></rect><rect x="963" y="275" width="1" height="2" fill="#ababab"></rect><rect x="975" y="275" width="1" height="2" fill="#ababab"></rect><rect x="987" y="275" width="1" height="2" fill="#ababab"></rect><rect x="1010" y="275" width="1" height="2" fill="#ababab"></rect><rect x="1021" y="275" width="1" height="2" fill="#ababab"></rect><rect x="1033" y="275" width="1" height="2" fill="#ababab"></rect><rect x="1045" y="273" width="1" height="6" fill="#8e8e8e"></rect><rect x="1056" y="275" width="1" height="2" fill="#ababab"></rect><rect x="1068" y="275" width="1" height="2" fill="#ababab"></rect><rect x="1079" y="275" width="1" height="2" fill="#ababab"></rect><rect x="1103" y="275" width="1" height="2" fill="#ababab"></rect><rect x="1114" y="275" width="1" height="2" fill="#ababab"></rect><rect x="1126" y="275" width="1" height="2" fill="#ababab"></rect><rect x="1137" y="273" width="1" height="6" fill="#8e8e8e"></rect><rect x="1149" y="275" width="1" height="2" fill="#ababab"></rect><rect x="1161" y="275" width="1" height="2" fill="#ababab"></rect><rect x="1172" y="275" width="1" height="2" fill="#ababab"></rect><rect x="1195" y="275" width="1" height="2" fill="#ababab"></rect><rect x="1207" y="275" width="1" height="2" fill="#ababab"></rect><rect x="1219" y="275" width="1" height="2" fill="#ababab"></rect><rect x="1230" y="273" width="1" height="6" fill="#8e8e8e"></rect><rect x="1242" y="275" width="1" height="2" fill="#ababab"></rect><rect x="1253" y="275" width="1" height="2" fill="#ababab"></rect><rect x="1265" y="275" width="1" height="2" fill="#ababab"></rect><rect x="1288" y="275" width="1" height="2" fill="#ababab"></rect><rect x="1300" y="275" width="1" height="2" fill="#ababab"></rect><rect x="1311" y="275" width="1" height="2" fill="#ababab"></rect><rect x="1323" y="273" width="1" height="6" fill="#8e8e8e"></rect><rect x="1334" y="275" width="1" height="2" fill="#ababab"></rect><rect x="1346" y="275" width="1" height="2" fill="#ababab"></rect><rect x="1358" y="275" width="1" height="2" fill="#ababab"></rect><rect x="1381" y="275" width="1" height="2" fill="#ababab"></rect><rect x="1392" y="275" width="1" height="2" fill="#ababab"></rect><rect x="1404" y="275" width="1" height="2" fill="#ababab"></rect><rect x="1416" y="273" width="1" height="6" fill="#8e8e8e"></rect><rect x="1427" y="275" width="1" height="2" fill="#ababab"></rect><rect x="1439" y="275" width="1" height="2" fill="#ababab"></rect><rect x="1450" y="275" width="1" height="2" fill="#ababab"></rect><rect x="1474" y="275" width="1" height="2" fill="#ababab"></rect><rect x="1485" y="275" width="1" height="2" fill="#ababab"></rect><rect x="1497" y="275" width="1" height="2" fill="#ababab"></rect><rect x="1508" y="273" width="1" height="6" fill="#8e8e8e"></rect><rect x="1520" y="275" width="1" height="2" fill="#ababab"></rect><text x="348.50" y="281.2" font-family="Liberation Sans" font-size="12.5" fill="#555" text-anchor="middle">6</text><text x="441.25" y="281.2" font-family="Liberation Sans" font-size="12.5" fill="#555" text-anchor="middle">5</text><text x="534.00" y="281.2" font-family="Liberation Sans" font-size="12.5" fill="#555" text-anchor="middle">4</text><text x="626.75" y="281.2" font-family="Liberation Sans" font-size="12.5" fill="#555" text-anchor="middle">3</text><text x="719.50" y="281.2" font-family="Liberation Sans" font-size="12.5" fill="#555" text-anchor="middle">2</text><text x="812.25" y="281.2" font-family="Liberation Sans" font-size="12.5" fill="#555" text-anchor="middle">1</text><text x="905.00" y="281.2" font-family="Liberation Sans" font-size="12.5" fill="#555" text-anchor="middle">0</text><text x="997.75" y="281.2" font-family="Liberation Sans" font-size="12.5" fill="#555" text-anchor="middle">1</text><text x="1090.50" y="281.2" font-family="Liberation Sans" font-size="12.5" fill="#555" text-anchor="middle">2</text><text x="1183.25" y="281.2" font-family="Liberation Sans" font-size="12.5" fill="#555" text-anchor="middle">3</text><text x="1276.00" y="281.2" font-family="Liberation Sans" font-size="12.5" fill="#555" text-anchor="middle">4</text><text x="1368.75" y="281.2" font-family="Liberation Sans" font-size="12.5" fill="#555" text-anchor="middle">5</text><text x="1461.50" y="281.2" font-family="Liberation Sans" font-size="12.5" fill="#555" text-anchor="middle">6</text><rect x="251" y="363" width="2.5" height="1" fill="#ababab"></rect><rect x="249" y="374" width="6" height="1" fill="#8e8e8e"></rect><rect x="251" y="386" width="2.5" height="1" fill="#ababab"></rect><rect x="251" y="398" width="2.5" height="1" fill="#ababab"></rect><rect x="251" y="409" width="2.5" height="1" fill="#ababab"></rect><text x="0" y="0" transform="translate(257.2 421.25) rotate(-90)" font-family="Liberation Sans" font-size="12.5" fill="#555" text-anchor="middle">3</text><rect x="251" y="432" width="2.5" height="1" fill="#ababab"></rect><rect x="251" y="444" width="2.5" height="1" fill="#ababab"></rect><rect x="251" y="456" width="2.5" height="1" fill="#ababab"></rect><rect x="249" y="467" width="6" height="1" fill="#8e8e8e"></rect><rect x="251" y="479" width="2.5" height="1" fill="#ababab"></rect><rect x="251" y="490" width="2.5" height="1" fill="#ababab"></rect><rect x="251" y="502" width="2.5" height="1" fill="#ababab"></rect><text x="0" y="0" transform="translate(257.2 514.00) rotate(-90)" font-family="Liberation Sans" font-size="12.5" fill="#555" text-anchor="middle">2</text><rect x="251" y="525" width="2.5" height="1" fill="#ababab"></rect><rect x="251" y="537" width="2.5" height="1" fill="#ababab"></rect><rect x="251" y="548" width="2.5" height="1" fill="#ababab"></rect><rect x="249" y="560" width="6" height="1" fill="#8e8e8e"></rect><rect x="251" y="571" width="2.5" height="1" fill="#ababab"></rect><rect x="251" y="583" width="2.5" height="1" fill="#ababab"></rect><rect x="251" y="595" width="2.5" height="1" fill="#ababab"></rect><text x="0" y="0" transform="translate(257.2 606.75) rotate(-90)" font-family="Liberation Sans" font-size="12.5" fill="#555" text-anchor="middle">1</text><rect x="251" y="618" width="2.5" height="1" fill="#ababab"></rect><rect x="251" y="629" width="2.5" height="1" fill="#ababab"></rect><rect x="251" y="641" width="2.5" height="1" fill="#ababab"></rect><rect x="249" y="653" width="6" height="1" fill="#8e8e8e"></rect><rect x="251" y="664" width="2.5" height="1" fill="#ababab"></rect><rect x="251" y="676" width="2.5" height="1" fill="#ababab"></rect><rect x="251" y="687" width="2.5" height="1" fill="#ababab"></rect><text x="0" y="0" transform="translate(257.2 699.50) rotate(-90)" font-family="Liberation Sans" font-size="12.5" fill="#555" text-anchor="middle">0</text><rect x="251" y="711" width="2.5" height="1" fill="#ababab"></rect><rect x="251" y="722" width="2.5" height="1" fill="#ababab"></rect><rect x="251" y="734" width="2.5" height="1" fill="#ababab"></rect><rect x="249" y="745" width="6" height="1" fill="#8e8e8e"></rect><rect x="251" y="757" width="2.5" height="1" fill="#ababab"></rect><rect x="251" y="769" width="2.5" height="1" fill="#ababab"></rect><rect x="251" y="780" width="2.5" height="1" fill="#ababab"></rect><text x="0" y="0" transform="translate(257.2 792.25) rotate(-90)" font-family="Liberation Sans" font-size="12.5" fill="#555" text-anchor="middle">1</text><rect x="251" y="803" width="2.5" height="1" fill="#ababab"></rect><rect x="251" y="815" width="2.5" height="1" fill="#ababab"></rect><rect x="251" y="827" width="2.5" height="1" fill="#ababab"></rect><rect x="249" y="838" width="6" height="1" fill="#8e8e8e"></rect><rect x="251" y="850" width="2.5" height="1" fill="#ababab"></rect><rect x="251" y="861" width="2.5" height="1" fill="#ababab"></rect><rect x="251" y="873" width="2.5" height="1" fill="#ababab"></rect><text x="0" y="0" transform="translate(257.2 885.00) rotate(-90)" font-family="Liberation Sans" font-size="12.5" fill="#555" text-anchor="middle">2</text><rect x="251" y="896" width="2.5" height="1" fill="#ababab"></rect><rect x="251" y="908" width="2.5" height="1" fill="#ababab"></rect><rect x="251" y="919" width="2.5" height="1" fill="#ababab"></rect><rect x="249" y="931" width="6" height="1" fill="#8e8e8e"></rect><rect x="251" y="942" width="2.5" height="1" fill="#ababab"></rect><rect x="251" y="954" width="2.5" height="1" fill="#ababab"></rect><rect x="251" y="966" width="2.5" height="1" fill="#ababab"></rect><text x="0" y="0" transform="translate(257.2 977.75) rotate(-90)" font-family="Liberation Sans" font-size="12.5" fill="#555" text-anchor="middle">3</text><rect x="251" y="989" width="2.5" height="1" fill="#ababab"></rect><rect x="251" y="1000" width="2.5" height="1" fill="#ababab"></rect><rect x="251" y="1012" width="2.5" height="1" fill="#ababab"></rect><rect x="249" y="1024" width="6" height="1" fill="#8e8e8e"></rect><rect x="251" y="1035" width="2.5" height="1" fill="#ababab"></rect><line x1="671.6" y1="268" x2="671.6" y2="286" stroke="#d9623b" stroke-width="1.3" stroke-dasharray="2 2"></line><line x1="244" y1="534.8" x2="262" y2="534.8" stroke="#d9623b" stroke-width="1.3" stroke-dasharray="2 2"></line></svg>
<div class="a" style="left:285px;top:350px;width:1239px;height:698px;background:#fff;border:1px solid #c6c6c6;box-shadow:0 0 2px rgba(0,0,0,.08)"></div>
<svg class="a" style="left:0px;top:0px" width="1536" height="1062" viewBox="0 0 1536 1062" preserveAspectRatio="none"><g fill="none" stroke="#bfbfbf" stroke-width="3"><ellipse cx="578" cy="482.8" rx="127.5" ry="60.6"></ellipse><ellipse cx="1238" cy="524.2" rx="128" ry="60.6"></ellipse><ellipse cx="541.6" cy="876.4" rx="128" ry="60.8"></ellipse><ellipse cx="1308" cy="843.3" rx="128.3" ry="60.5"></ellipse></g><ellipse cx="904.4" cy="684.5" rx="199.4" ry="75.7" fill="#4472c4" stroke="#2f528f" stroke-width="1"></ellipse><circle cx="705.50" cy="482.80" r="6.2" fill="#fff"></circle><circle cx="705.50" cy="482.80" r="4.4" fill="#8c8c8c"></circle><circle cx="668.16" cy="525.65" r="6.2" fill="#fff"></circle><circle cx="668.16" cy="525.65" r="4.4" fill="#8c8c8c"></circle><circle cx="578.00" cy="543.40" r="6.2" fill="#fff"></circle><circle cx="578.00" cy="543.40" r="4.4" fill="#8c8c8c"></circle><circle cx="487.84" cy="525.65" r="6.2" fill="#fff"></circle><circle cx="487.84" cy="525.65" r="4.4" fill="#8c8c8c"></circle><circle cx="450.50" cy="482.80" r="6.2" fill="#fff"></circle><circle cx="450.50" cy="482.80" r="4.4" fill="#8c8c8c"></circle><circle cx="487.84" cy="439.95" r="6.2" fill="#fff"></circle><circle cx="487.84" cy="439.95" r="4.4" fill="#8c8c8c"></circle><circle cx="578.00" cy="422.20" r="6.2" fill="#fff"></circle><circle cx="578.00" cy="422.20" r="4.4" fill="#8c8c8c"></circle><circle cx="668.16" cy="439.95" r="6.2" fill="#fff"></circle><circle cx="668.16" cy="439.95" r="4.4" fill="#8c8c8c"></circle><path d="M671.5 528 V542 M664.5 535 H678.5" stroke="#2b2b2b" stroke-width="1.3"></path></svg>
<span class="f" style="--l: 830.8; --r: 978.4; --b: 674.5; font-size: 32px; color: rgb(255, 255, 255); font-weight: normal; -webkit-text-stroke: 0.4px rgb(255, 255, 255); left: 828.66px; top: 648px; transform: scaleX(1.0719);">Mind map</span>
<span class="f" style="--l: 834.7; --r: 974.2; --b: 718.2; font-size: 32px; color: rgb(255, 255, 255); font-weight: normal; -webkit-text-stroke: 0.4px rgb(255, 255, 255); left: 832.67px; top: 691px; transform: scaleX(1.0128);">Idea Here</span>

</body></html>
